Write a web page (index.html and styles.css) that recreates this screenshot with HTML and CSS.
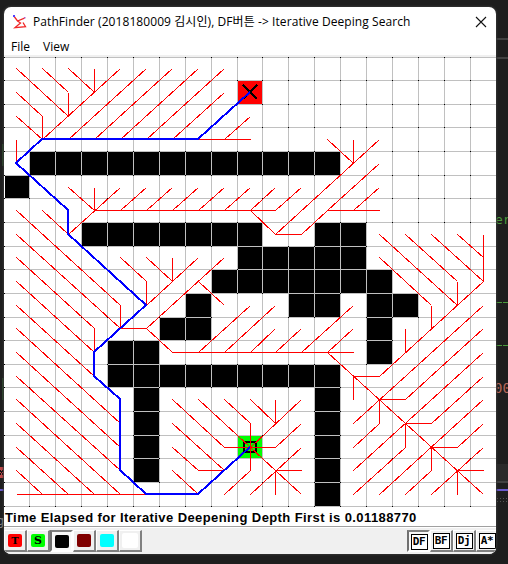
FILE: index.html
```html
<!DOCTYPE html>
<html lang="ko">
<head>
<meta charset="utf-8">
<title>PathFinder</title>
<link rel="stylesheet" href="styles.css">
</head>
<body>
<svg class="backdrop" width="508" height="564" viewBox="0 0 508 564" shape-rendering="crispEdges">
  <rect width="508" height="564" fill="#1e1e1e"/>
  <rect x="496" y="464" width="12" height="18" fill="#2a2a2a"/>
  <path d="M496 39h12M496 57.5h12M496 481.5h12" stroke="#414141" stroke-width="2"/>
  <path d="M496 302.5h6m1 0h5M496 345.5h6m1 0h5" stroke="#4a9a3c"/>
  <rect x="496" y="489" width="12" height="2" fill="#6a5acd"/>
  <rect x="0" y="489" width="4" height="2" fill="#6a5acd"/>
  <path d="M497 498.5h11M497 501.5h11" stroke="#555" stroke-dasharray="1 2"/>
  <rect x="0" y="467" width="4" height="11" fill="#c04848"/>
  <path d="M0 470l3 5M3 470l-3 5" stroke="#111"/>
  <path d="M2.5 144v22M2.5 378v22" stroke="#2c482c" stroke-width="2"/>
  <text class="code-green" x="495" y="224">er</text>
  <text class="code-red" x="494" y="393">00</text>
  <text class="code-gray" x="-3" y="525">g</text>
</svg>
<div class="window">
  <header class="titlebar">
    <svg class="logo" width="16" height="16" viewBox="0 0 16 16"><path d="M2.2 2.5L5.5 7L12.5 4.2M5.5 7L8.5 9L3 13.6L13.5 12.6L11 8.5" fill="none" stroke="#f02828" stroke-width="1.3"/><rect x="1" y="1" width="2" height="2" fill="#5040ff"/><rect x="12" y="3" width="1.5" height="1.5" fill="#b060d0"/></svg>
    <h1 class="title">PathFinder (2018180009 김시인), DF버튼 -&gt; Iterative Deeping Search</h1>
    <svg class="close" width="12" height="12" viewBox="0 0 12 12"><path d="M1 1L11 11M11 1L1 11" stroke="#111" stroke-width="1.1"/></svg>
  </header>
  <nav class="menu"><span>File</span><span>View</span></nav>
  <svg id="board" class="board" width="492" height="450" viewBox="4 57 492 450" shape-rendering="crispEdges"></svg>
  <p class="status"><span>Time Elapsed for Iterative Deepening Depth First is 0.01188770</span></p>
  <footer class="toolbar">
    <div class="group">
      <span class="btn"><i class="chip target">T</i></span>
      <span class="btn"><i class="chip start">S</i></span>
      <span class="btn pressed"><i class="chip wall"></i></span>
      <span class="btn"><i class="chip maroon"></i></span>
      <span class="btn"><i class="chip cyan"></i></span>
      <span class="btn"><i class="chip blank"></i></span>
    </div>
    <div class="group algos">
      <span class="btn pressed"><i class="algo">DF</i></span>
      <span class="btn"><i class="algo">BF</i></span>
      <span class="btn"><i class="algo">Dj</i></span>
      <span class="btn"><i class="algo">A*</i></span>
    </div>
  </footer>
</div>
<script src="board.js"></script>
</body>
</html>
```
FILE: styles.css
```css
* { box-sizing: border-box; }
body { margin: 0; width: 508px; height: 564px; overflow: hidden; background: #1e1e1e; font-family: "Open Sans", "Noto Sans CJK KR", sans-serif; }
.backdrop { position: absolute; left: 0; top: 0; z-index: -1; }
.code-green, .code-red, .code-gray { font-family: "DejaVu Sans Mono", monospace; font-size: 13px; }
.code-green { fill: #4a9a3c; }
.code-red { fill: #b5675a; font-size: 14px; }
.code-gray { fill: #888; font-size: 12px; }
.window { margin: 7px 0 0 4px; width: 492px; height: 547px; background: #fff; border-radius: 7px; overflow: hidden; display: flex; flex-direction: column; box-shadow: 0 0 2px 1px #333; }
.titlebar { height: 29px; display: flex; align-items: center; padding: 0 9px 0 8px; }
.title { margin: 0 0 0 5px; flex: 1; font-size: 12px; font-weight: 400; line-height: 20px; letter-spacing: 0.075px; white-space: nowrap; color: #000; }
.menu { height: 21px; display: flex; gap: 13px; padding-left: 7px; font-size: 12px; line-height: 21px; border-bottom: 2px solid #f0f0f0; }
.board { display: block; flex: none; }
.status { margin: 0; height: 20px; padding-left: 1px; font: bold 13px/21px "Liberation Sans", Arial, sans-serif; letter-spacing: 0.41px; white-space: nowrap; color: #000; border-bottom: 1px solid #a0a0a0; }
.toolbar { flex: 1; display: flex; justify-content: space-between; background: #f0f0f0; border-top: 1px solid #fff; padding-top: 2px; }
.group { display: flex; }
.btn { flex: none; width: 23px; height: 22px; display: flex; align-items: center; justify-content: center; background: #f0f0f0; border: 1px solid #fff; border-right: 2px solid #808080; border-bottom: 2px solid #808080; }
.btn.pressed { border: 2px solid #fff; border-left-color: #707070; border-top-color: #808080; background: #f8f8f8; padding: 1px 0 0 1px; }
.chip { width: 14px; height: 13px; border-radius: 2px; font: bold 11px/14px "DejaVu Serif", serif; text-align: center; color: #000; }
.target { background: #f00; font-size: 10px; }
.start { background: #0f0; }
.wall { background: #000; }
.maroon { background: #800000; }
.cyan { background: #0ff; }
.blank { background: #fff; width: 16px; height: 15px; }
.algos { width: 89px; overflow: hidden; }
.algo { flex: none; width: 17px; height: 16px; border: 1px solid #000; background: #fff; font: bold 11px/14px "DejaVu Sans Mono", monospace; letter-spacing: -0.3px; text-align: center; color: #000; }
```
FILE: board.js
```js
const SIZE = 19;
const STEP_X = 25.89;
const STEP_Y = 23.64;
const edgeX = c => Math.floor(4 + c * STEP_X);
const edgeY = r => Math.floor(57 + r * STEP_Y);
const midX = c => Math.floor(4 + (c + 0.5) * STEP_X + 0.05);
const midY = r => Math.floor(57 + (r + 0.5) * STEP_Y);

// Obstacles: row -> list of [first column, last column]
const walls = {
  4: [[1, 12]], 5: [[0, 0]], 7: [[3, 9], [12, 13]].map(([a, b]) => [a, b]), 8: [[9, 13]], 9: [[8, 14]],
  10: [[7, 7], [11, 12], [14, 15]], 11: [[6, 7], [14, 14]], 12: [[4, 5], [14, 14]],
  13: [[4, 12]], 14: [[5, 5], [12, 12]], 15: [[5, 5], [12, 12]],
  16: [[5, 5], [12, 12]], 17: [[5, 5], [12, 12]], 18: [[12, 12]]
};
const isWall = (c, r) => (walls[r] || []).some(([a, b]) => c >= a && c <= b);

// Search tree branches, each a run of "column,row" cells
const branches = `
0,0 2,2|2,1 2,2|1,0 2,1|2,0 3,1|3,0 3,1|4,0 1,3|0,1 1,2 1,3|0,2 1,3|5,0 2,3|6,0 3,3|7,0 4,3|8,0 5,3|8,1 6,3|9,2 8,3|7,3 9,3|0,3 0,4
2,5 3,6|3,5 3,6|4,5 2,7|5,5 4,6|6,5 5,6|7,5 6,6|8,5 7,6|9,5 8,6|10,5 9,6|11,5 10,6|3,6 10,6|9,6 10,7 11,7|10,7 14,3|12,3 13,4|13,3 13,4|11,7 12,6 14,4|12,6 14,6|14,5 13,6
1,6 2,7|0,6 4,10 4,11|0,7 4,11|0,8 3,11 3,12|0,9 3,12|0,10 3,13|0,11 4,15|0,12 4,16|0,13 4,17|0,14 4,18|0,15 3,18|0,16 2,18|0,17 1,18|0,18 5,18
4,8 5,9 5,10|5,8 6,9|6,8 6,9|7,8 5,10|8,8 5,11|7,9 8,10|4,11 5,11 6,12 13,12|9,10 7,12|10,10 8,12|10,11 9,12|11,11 10,12|13,10 11,12|13,11 12,12|12,12 18,18
13,14 13,13 14,13 18,9|15,11 15,12|16,10 16,11|14,8 16,10|14,7 17,10 17,9|15,7 17,9|16,7 18,9|17,7 18,8|18,7 18,9
18,10 13,15|18,11 15,14 14,14 14,15 13,16|18,12 13,17|18,13 16,15 15,15 15,16 13,18|18,14 14,18|18,15 17,16 16,16 16,17 15,18|18,16 16,18|18,17 17,17 17,18
6,14 8,16 9,16|7,14 9,16|8,14 9,15 9,17 8,18|6,15 8,17|6,16 7,17 8,17|6,17 7,18|9,14 10,15|10,14 10,15|11,14 9,16|11,15 10,16 9,16|9,16 11,18|10,18 10,17 11,17|11,16 9,18
`;
const route = '9,1 7,3 1,3 0,4 2,6 2,7 5,10 3,12 3,13 4,14 4,17 5,18 7,18 9,16';

const toPath = (run, shift) => 'M' + run.trim().split(/\s+/).map(p => {
  const [c, r] = p.split(',').map(Number);
  return (midX(c) + shift) + ' ' + (midY(r) + shift);
}).join('L');
const rect = (x, y, w, h, fill) => `<rect x="${x}" y="${y}" width="${w}" height="${h}" fill="${fill}"/>`;
const cell = (c, r, fill) => {
  const x = edgeX(c) + 1, y = edgeY(r) + 1;
  return rect(x, y, edgeX(c + 1) - x, edgeY(r + 1) - y, fill);
};

let out = rect(4, 57, 492, 450, '#fff');
for (let c = 1; c < SIZE; c++) out += rect(edgeX(c), 57, 1, 450, '#c0c0c0');
for (let r = 0; r <= SIZE; r++) out += rect(4, edgeY(r), 492, 1, '#c0c0c0');
for (let r = 0; r < SIZE; r++)
  for (let c = 0; c < SIZE; c++)
    if (isWall(c, r)) out += cell(c, r, '#000');
for (let r = 0; r <= SIZE; r++)
  for (let c = 0; c < SIZE; c++)
    if (!(isWall(c, r) && isWall(c - 1, r - 1))) out += rect(edgeX(c), edgeY(r), 1, 1, '#000');

out += cell(9, 1, '#f00') + cell(9, 16, '#0f0');
out += '<path d="M243 85L257 99M257 85L243 99" stroke="#000" stroke-width="2"/>';
out += '<rect x="244" y="442" width="12" height="10" fill="none" stroke="#000" stroke-width="2"/>';
out += `<path d="${branches.trim().split(/[|\n]/).map(run => toPath(run, 0.5)).join('')}" fill="none" stroke="#f00" stroke-width="1"/>`;
out += `<path d="${toPath(route, 0)}" fill="none" stroke="#00f" stroke-width="2"/>`;
document.getElementById('board').innerHTML = out;
```
